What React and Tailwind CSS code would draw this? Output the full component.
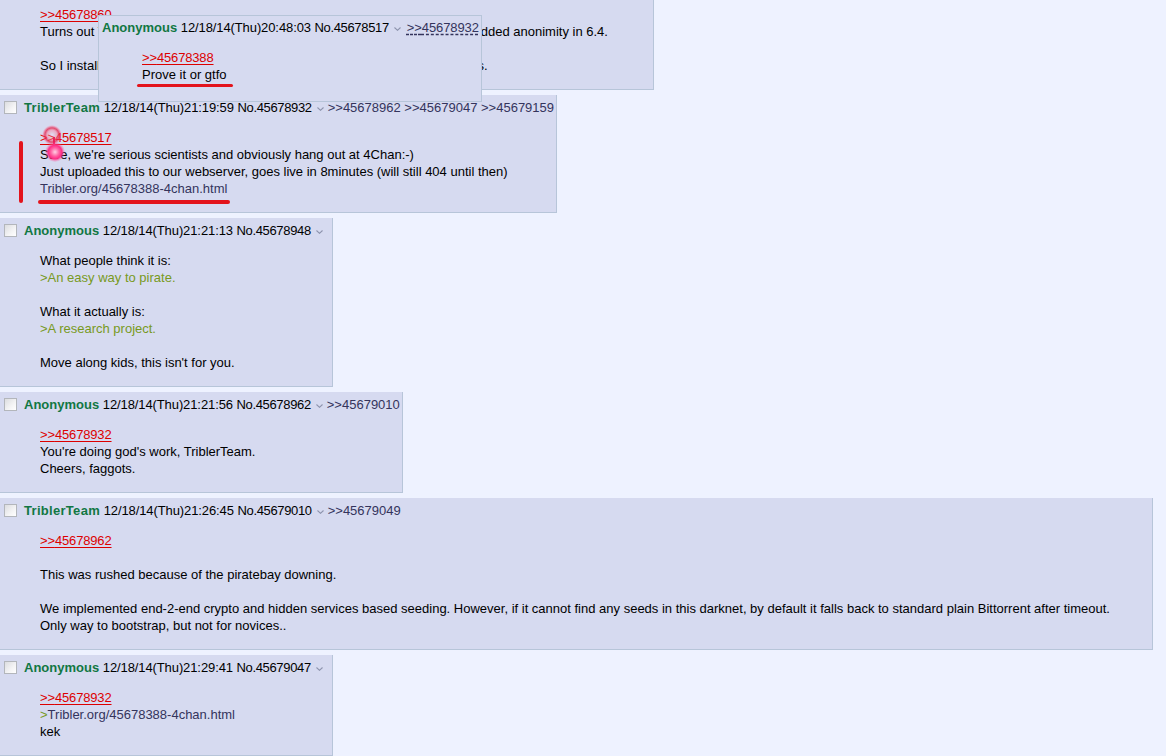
import React from "react";

const Chevron = ({ className = "ml-[5px] mr-[4px]" }) => (
  <svg width="7" height="4" viewBox="0 0 7 4" className={"inline-block align-middle " + className}>
    <path d="M0.5 0.5 L3.5 3.3 L6.5 0.5" fill="none" stroke="#8d93ad" strokeWidth="1.1" />
  </svg>
);

const Checkbox = () => (
  <span className="inline-block align-middle ml-[2px] mr-[7px] w-[13px] h-[13px] border border-[#b3b6bb] bg-[linear-gradient(135deg,#dcdde0_0%,#f4f4f5_60%,#ffffff_100%)] -mt-[2px]" />
);

const Quote = ({ n }) => (
  <a className="text-[#dd0000] underline decoration-[#dd0000] underline-offset-[2px] tracking-[-0.15px]">&gt;&gt;{n}</a>
);

const Header = ({ name, date, no, backlinks = [], preview = false, dashed, wideName = false }) => (
  <div className="leading-[17px] h-[17px] whitespace-nowrap">
    {!preview && <Checkbox />}
    <span className={"font-bold text-[#117743] " + (wideName ? "tracking-[0.3px]" : "")}>{name}</span>{" "}
    <span className="tracking-[-0.1px]">{date}</span>{" "}
    <span className="tracking-[-0.35px]">No.{no}</span>
    {preview ? <Chevron className="ml-[5px] mr-[6px]" /> : <Chevron />}
    {dashed && (
      <a className="text-[#34345c] underline decoration-dashed decoration-[#34345c] underline-offset-[2px] tracking-[-0.1px]">&gt;&gt;{dashed}</a>
    )}
    {!preview && backlinks.length === 0 && <span>&nbsp;</span>}
    {backlinks.map((b, i) => (
      <React.Fragment key={b}>
        {i > 0 && " "}
        <a className="text-[#34345c]">&gt;&gt;{b}</a>
      </React.Fragment>
    ))}
  </div>
);

const Line = ({ children }) => <div className="leading-[17px] min-h-[17px] whitespace-nowrap">{children}</div>;
const Green = ({ children }) => <span className="text-[#789922]">{children}</span>;
const Link = ({ children }) => <span className="text-[#34345c]">{children}</span>;

const Post = ({ header, children, className = "" }) => (
  <div className={"w-fit bg-[#d6daf0] border-r border-b border-[#b7c5d9] pl-[2px] pr-[2px] pt-[4px] pb-[2px] " + className}>
    <Header {...header} />
    <div className="ml-[38px] mr-[40px] my-[13px]">{children}</div>
  </div>
);

export default function App() {
  return (
    <div className="relative h-screen overflow-hidden bg-[#eef2ff] text-[13px] text-black font-['Liberation_Sans',_Arial,_sans-serif]">
      <div className="flex flex-col items-start gap-[5px]">
        {/* Post 1 (header scrolled out of view) */}
        <div className="w-[654px] bg-[#d6daf0] border-r border-b border-[#b7c5d9] pl-[2px] pr-[2px] pt-[6px] pb-[2px]">
          <div className="ml-[38px] mr-[40px] mb-[13px]">
            <Line><Quote n="45678860" /></Line>
            <Line>Turns out Tribler, the decentralized torrent client from the TU Delft campus, added anonimity in 6.4.</Line>
            <Line />
            <Line>So I installed it but it doesn't seem to find any seeders for most of my torrents.</Line>
          </div>
        </div>

        <Post header={{ name: "TriblerTeam", wideName: true, date: "12/18/14(Thu)21:19:59", no: "45678932", backlinks: ["45678962", "45679047", "45679159"] }}>
          <Line><Quote n="45678517" /></Line>
          <Line>Sure, we're serious scientists and obviously hang out at 4Chan:-)</Line>
          <Line>Just uploaded this to our webserver, goes live in 8minutes (will still 404 until then)</Line>
          <Line><Link>Tribler.org/45678388-4chan.html</Link></Line>
        </Post>

        <Post header={{ name: "Anonymous", date: "12/18/14(Thu)21:21:13", no: "45678948" }}>
          <Line>What people think it is:</Line>
          <Line><Green>&gt;An easy way to pirate.</Green></Line>
          <Line />
          <Line>What it actually is:</Line>
          <Line><Green>&gt;A research project.</Green></Line>
          <Line />
          <Line>Move along kids, this isn't for you.</Line>
        </Post>

        <Post header={{ name: "Anonymous", date: "12/18/14(Thu)21:21:56", no: "45678962", backlinks: ["45679010"] }}>
          <Line><Quote n="45678932" /></Line>
          <Line>You're doing god's work, TriblerTeam.</Line>
          <Line>Cheers, faggots.</Line>
        </Post>

        <Post header={{ name: "TriblerTeam", wideName: true, date: "12/18/14(Thu)21:26:45", no: "45679010", backlinks: ["45679049"] }}>
          <Line><Quote n="45678962" /></Line>
          <Line />
          <Line>This was rushed because of the piratebay downing.</Line>
          <Line />
          <Line>We implemented end-2-end crypto and hidden services based seeding. However, if it cannot find any seeds in this darknet, by default it falls back to standard plain Bittorrent after timeout.</Line>
          <Line>Only way to bootstrap, but not for novices..</Line>
        </Post>

        <Post header={{ name: "Anonymous", date: "12/18/14(Thu)21:29:41", no: "45679047" }}>
          <Line><Quote n="45678932" /></Line>
          <Line><Green>&gt;</Green><Link>Tribler.org/45678388-4chan.html</Link></Line>
          <Line>kek</Line>
        </Post>
      </div>

      {/* Quote preview popup */}
      <div className="absolute left-[98px] top-[15px] w-[384px] bg-[#d6daf0] border border-[#b7c5d9] pl-[3px] pt-[3px] pb-[5px]">
        <Header preview name="Anonymous" date="12/18/14(Thu)20:48:03" no="45678517" dashed="45678932" />
        <div className="ml-[40px] mt-[13px] mb-[13px]">
          <Line><Quote n="45678388" /></Line>
          <Line>Prove it or gtfo</Line>
        </div>
      </div>

      {/* Red annotations */}
      <div className="absolute left-[137px] top-[84px] w-[96px] h-[3px] rounded-full bg-[#e3131c]" />
      <div className="absolute left-[19px] top-[141px] w-[4px] h-[62px] rounded-full bg-[#e3131c]" />
      <div className="absolute left-[38px] top-[200px] w-[192px] h-[4px] rounded-full bg-[#e3131c]" />

      {/* Touch indicator */}
      <div className="absolute left-[42px] top-[125px] w-[20px] h-[20px] rounded-full bg-[radial-gradient(circle,_rgba(255,255,255,0.2)_0%,_rgba(255,120,150,0.5)_35%,_rgba(230,40,80,0.8)_50%,_rgba(255,120,160,0.3)_65%,_transparent_72%)]" />
      <div className="absolute left-[53px] top-[137px] w-[2px] h-[10px] bg-[#e8205a]" />
      <div className="absolute left-[45px] top-[142px] w-[20px] h-[20px] rounded-full bg-[radial-gradient(circle,_#ffd0e4_0%,_#ff5fa2_30%,_#ff2d86_48%,_rgba(255,80,150,0.35)_62%,_transparent_74%)]" />
    </div>
  );
}
